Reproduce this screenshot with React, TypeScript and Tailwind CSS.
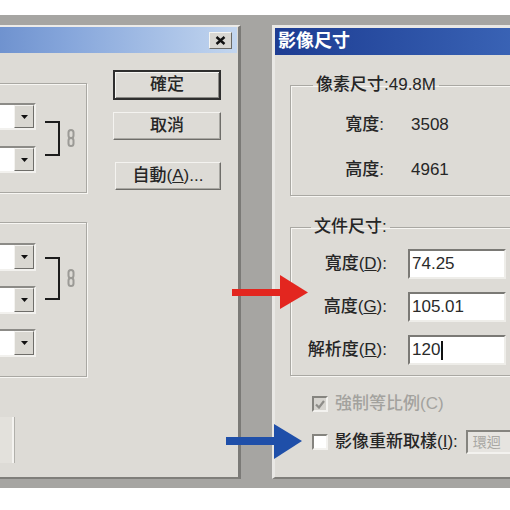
import type { ReactNode } from "react";

const font = "font-['Liberation_Sans','Noto_Sans_CJK_TC',sans-serif]";

function Dropdown({ tall = false }: { tall?: boolean }) {
  return (
    <div
      className={`flex w-[110px] justify-end border-2 border-t-[#8c8b87] border-l-[#8c8b87] border-b-[#f2f1ee] border-r-[#f2f1ee] bg-white ${
        tall ? "h-[28px]" : "h-[27px]"
      }`}
    >
      <div className="flex w-[20px] items-center justify-center border border-t-[#f4f3f0] border-l-[#f4f3f0] border-b-[#6f6e6a] border-r-[#6f6e6a] bg-[#d9d7d1]">
        <svg width="7" height="4" viewBox="0 0 7 4">
          <path d="M0 0h7L3.5 4z" fill="#111" />
        </svg>
      </div>
    </div>
  );
}

function Bracket({ tall = false }: { tall?: boolean }) {
  return (
    <div
      className={`ml-[9px] w-[15px] border-y-[2.5px] border-r-[2.5px] border-[#1c1c1c] ${
        tall ? "h-[43px]" : "h-[35px]"
      }`}
    />
  );
}

function Chain() {
  return (
    <svg width="8" height="18" viewBox="0 0 8 18" className="ml-[7px]">
      <rect x="1.5" y="1" width="5" height="8" rx="2.5" fill="none" stroke="#9b9a96" strokeWidth="2" />
      <rect x="1.5" y="9" width="5" height="8" rx="2.5" fill="none" stroke="#9b9a96" strokeWidth="2" />
    </svg>
  );
}

function Button({ children, strong = false, cls = "" }: { children: ReactNode; strong?: boolean; cls?: string }) {
  return (
    <div
      className={`flex items-center justify-center text-[17px] font-medium text-[#262626] ${cls} ${
        strong
          ? "border-[2.5px] border-[#2f2f2f] shadow-[inset_1px_1px_0_#f6f6f3,inset_-1px_-1px_0_#8a8985]"
          : "border border-t-[#f4f3f0] border-l-[#f4f3f0] border-b-[#6e6d69] border-r-[#6e6d69] shadow-[inset_-1px_-1px_0_#a9a8a3]"
      }`}
    >
      {children}
    </div>
  );
}

function Field({ value, caret = false }: { value: string; caret?: boolean }) {
  return (
    <div className="flex h-[30px] w-[98px] items-center border-2 border-t-[#7a7975] border-l-[#7a7975] border-b-[#eeede9] border-r-[#eeede9] bg-white pl-[2px] text-[17px] text-[#2a2a2a]">
      {value}
      {caret && <span className="ml-[1px] h-[19px] w-[1.5px] bg-[#111]" />}
    </div>
  );
}

function Check({ checked = false, disabled = false }: { checked?: boolean; disabled?: boolean }) {
  return (
    <div
      className={`flex h-[16px] w-[16px] items-center justify-center border-2 border-t-[#85847f] border-l-[#85847f] border-b-[#f3f2ef] border-r-[#f3f2ef] ${
        disabled ? "bg-[#d6d4cf]" : "bg-white"
      }`}
    >
      {checked && (
        <svg width="10" height="9" viewBox="0 0 10 9">
          <path d="M1 4.5l3 3L9 1" fill="none" stroke="#8e8d89" strokeWidth="2.2" />
        </svg>
      )}
    </div>
  );
}

export default function App() {
  return (
    <div className={`relative h-[510px] w-[510px] overflow-hidden bg-white ${font}`}>
      <div className="mt-[15px] flex h-[473px] overflow-hidden bg-[#a6a5a2] pt-[10px]">
        {/* left dialog, cut off at the left edge */}
        <div className="ml-[-100px] flex h-[454px] w-[341px] shrink-0 flex-col border-t-2 border-r-[3px] border-b-2 border-t-[#ecebe8] border-r-[#7b7a77] border-b-[#7f7e7a] bg-[#dddbd6]">
          <div className="mr-px flex h-[26px] items-center justify-end bg-gradient-to-r from-[#4f76bd] via-[#86a6db] to-[#c3d6ef]">
            <div className="mr-[5px] flex h-[17px] w-[23px] items-center justify-center border border-t-[#f5f5f2] border-l-[#f5f5f2] border-b-[#6b6a66] border-r-[#6b6a66] bg-[#d9d7d2]">
              <svg width="11" height="9" viewBox="0 0 11 9">
                <path d="M1.5 1l8 7M9.5 1l-8 7" stroke="#111" strokeWidth="2.4" />
              </svg>
            </div>
          </div>

          <div className="flex flex-1 pl-[10px]">
            <div className="mt-[30px] flex w-[177px] flex-col">
              <div className="flex h-[110px] items-center border border-[#a9a8a3] pl-[15px] shadow-[1px_1px_0_#f7f6f3,inset_1px_1px_0_#f7f6f3]">
                <div className="flex flex-col gap-[16px]">
                  <Dropdown />
                  <Dropdown />
                </div>
                <Bracket />
                <Chain />
              </div>

              <div className="mt-[29px] flex h-[155px] flex-col justify-center gap-[15px] border border-[#a9a8a3] pl-[15px] shadow-[1px_1px_0_#f7f6f3,inset_1px_1px_0_#f7f6f3]">
                <div className="flex items-center">
                  <div className="flex flex-col gap-[15px]">
                    <Dropdown tall />
                    <Dropdown tall />
                  </div>
                  <Bracket tall />
                  <Chain />
                </div>
                <Dropdown tall />
              </div>

              <div className="mt-[40px] h-[46px] w-[104px] border-r-2 border-[#f4f3f0] bg-[#e3e1dc] shadow-[1px_0_0_#b1b0ab]" />
            </div>

            <div className="ml-[26px] mt-[17px] flex flex-col">
              <Button strong cls="h-[30px] w-[108px]">
                確定
              </Button>
              <Button cls="mt-[12px] h-[28px] w-[108px]">取消</Button>
              <Button cls="ml-[2px] mt-[22px] h-[28px] w-[106px]">
                自動(<u>A</u>)...
              </Button>
            </div>
          </div>
        </div>

        {/* right dialog, cut off at the right edge */}
        <div className="ml-[31px] flex h-[454px] w-[260px] shrink-0 flex-col border-t-[3px] border-l-[3px] border-b-2 border-t-[#e9e8e5] border-l-[#e9e8e5] border-b-[#7f7e7a] bg-[#dddbd6]">
          <div className="flex h-[27px] items-center bg-gradient-to-r from-[#1d3c92] to-[#3c66b8] pl-[3px] text-[18px] font-bold leading-[27px] text-white">
            影像尺寸
          </div>

          <div className="flex flex-col pl-[15px] text-[17px] font-medium text-[#262626]">
            <fieldset className="mt-[20px] border border-[#a9a8a3] pb-[13px] shadow-[1px_1px_0_#f7f6f3,inset_1px_1px_0_#f7f6f3]">
              <legend className="ml-[22px] px-[3px] leading-[20px]">像素尺寸:49.8M</legend>
              <div className="mt-[18px] grid grid-cols-[93px_auto] gap-x-[27px] gap-y-[21px] leading-[24px]">
                <span className="text-right">寬度:</span>
                <span>3508</span>
                <span className="text-right">高度:</span>
                <span>4961</span>
              </div>
            </fieldset>

            <fieldset className="mt-[21px] border border-[#a9a8a3] pb-[10px] shadow-[1px_1px_0_#f7f6f3,inset_1px_1px_0_#f7f6f3]">
              <legend className="ml-[20px] px-[3px] leading-[20px]">文件尺寸:</legend>
              <div className="mt-[12px] grid grid-cols-[96px_auto] items-center gap-x-[21px] gap-y-[13px]">
                <span className="text-right">
                  寬度(<u>D</u>):
                </span>
                <Field value="74.25" />
                <span className="text-right">
                  高度(<u>G</u>):
                </span>
                <Field value="105.01" />
                <span className="text-right">
                  解析度(<u>R</u>):
                </span>
                <Field value="120" caret />
              </div>
            </fieldset>

            <div className="ml-[22px] mt-[19px] flex items-center gap-[7px] text-[#a3a29e]">
              <Check checked disabled />
              <span className="leading-[18px]">強制等比例(C)</span>
            </div>
            <div className="ml-[22px] mt-[17px] flex items-center">
              <Check />
              <span className="ml-[7px] leading-[20px]">
                影像重新取樣(<u>I</u>):
              </span>
              <div className="ml-[8px] flex h-[24px] w-[60px] items-center border-2 border-t-[#85847f] border-l-[#85847f] border-b-[#f3f2ef] border-r-[#f3f2ef] bg-[#e6e4e0] pl-[5px] text-[14px] font-normal text-[#a8a7a3]">
                環迴
              </div>
            </div>
          </div>
        </div>
      </div>

      {/* annotation arrows */}
      <svg className="absolute left-0 top-0" width="510" height="510" viewBox="0 0 510 510">
        <rect x="232" y="289" width="52" height="7" fill="#e3261f" />
        <path d="M280 275L308 292.5L280 309z" fill="#e3261f" />
        <rect x="226" y="437" width="52" height="8" fill="#1f4fa9" />
        <path d="M274 424L302 441L274 459z" fill="#1f4fa9" />
      </svg>
    </div>
  );
}
